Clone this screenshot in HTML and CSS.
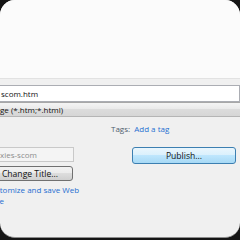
FILE: index.html
```html
<!DOCTYPE html>
<html lang="en">
<head>
    <meta charset="UTF-8">
    <title>Save Web Page</title>
    <link rel="stylesheet" href="styles.css">
</head>
<body>
    <div class="window">
        <div class="top"></div>

        <div class="field filename">scom.htm</div>
        <div class="savetype">ge (*.htm;*.html)</div>

        <div class="tags">
            <span class="tags-label">Tags:</span>
            <a class="link">Add a tag</a>
        </div>

        <div class="columns">
            <div class="left">
                <div class="field title-box">xies-scom</div>
                <button class="btn">Change Title...</button>
                <a class="link customize">Customize and save Web Page</a>
            </div>
            <div class="right">
                <button class="btn btn-default">Publish...</button>
            </div>
        </div>
    </div>
</body>
</html>
```

FILE: styles.css
```css
body {
    margin: 0;
    background-color: #151515;
    font-family: 'Open Sans', 'Noto Sans', sans-serif;
    font-size: 8px;
    color: #111111;
}
.window {
    height: 237px;
    background-color: #f0f0f0;
    border-radius: 15px;
    border-bottom: 1px solid #8c8c8c;
    overflow: hidden;
}
.top {
    height: 78px;
    background-color: #fbfbfb;
    border-bottom: 1px solid #e2e2e2;
}
.field {
    box-sizing: border-box;
    border: 1px solid #abadb3;
    background-color: #ffffff;
    line-height: 13px;
}
.filename {
    margin-top: 6px;
    margin-left: -2px;
    padding-left: 2px;
    height: 17px;
    line-height: 15px;
}
.savetype {
    box-sizing: border-box;
    height: 15px;
    line-height: 13px;
    border-top: 1px solid #a7a7a7;
    border-bottom: 1px solid #b5b5b5;
    background: linear-gradient(#f4f4f4, #e9e9e9 50%, #dcdcdc 50%, #d6d6d6);
}
.tags {
    margin-top: 6px;
    padding-left: 111px;
    line-height: 11px;
}
.tags-label {
    color: #4f5c6e;
    margin-right: 2px;
}
.link {
    color: #1f6fd0;
}
.columns {
    display: grid;
    grid-template-columns: 87px 1fr;
    margin-top: 13px;
    margin-left: -13px;
}
.left {
    display: flex;
    flex-direction: column;
}
.title-box {
    height: 15px;
    padding-left: 12px;
    background-color: #f4f4f4;
    border-color: #c9c9c9;
    color: #8d8d8d;
}
.btn {
    box-sizing: border-box;
    font-family: inherit;
    font-size: 8.6px;
    color: #111111;
    padding: 0;
    border: 1px solid #707070;
    border-radius: 3px;
    background: linear-gradient(#f2f2f2, #ebebeb 50%, #dddddd 50%, #cfcfcf);
}
.left .btn {
    height: 15px;
    margin-top: 4px;
    margin-right: 1px;
}
.customize {
    margin-top: 3px;
    margin-left: -1px;
    margin-right: -8px;
    line-height: 11px;
}
.right {
    padding-left: 58px;
    padding-right: 4px;
}
.btn-default {
    width: 104px;
    height: 17px;
    border-color: #3c7fb1;
    background: linear-gradient(#eaf6fd, #d9f0fc 50%, #bee6fd 50%, #a7d9f5);
}
```
